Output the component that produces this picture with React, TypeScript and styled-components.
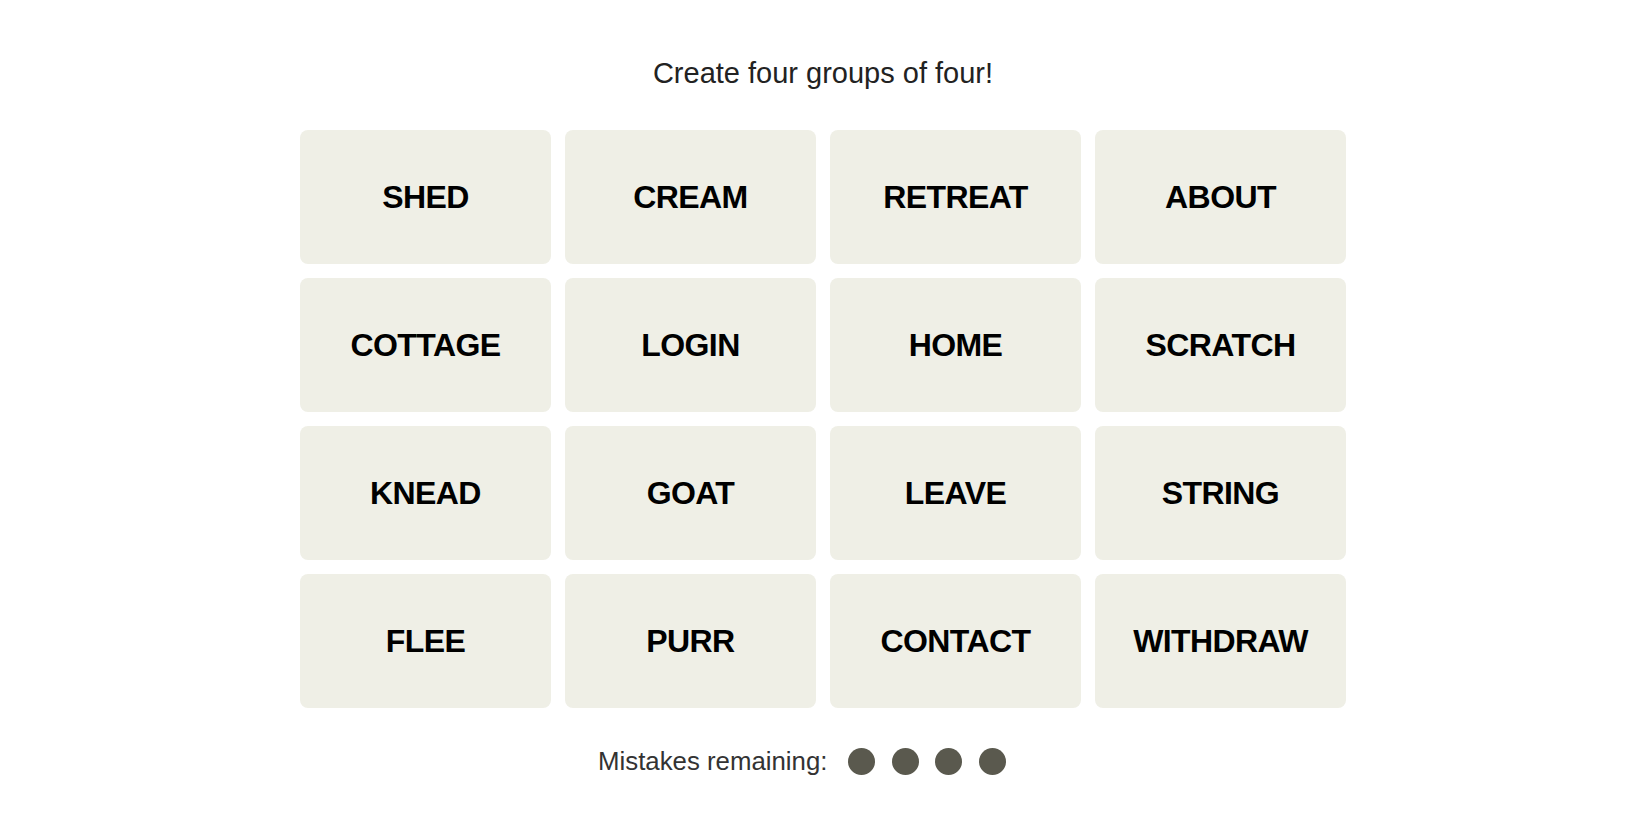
import React from "react";
import styled, { createGlobalStyle } from "styled-components";

const GlobalStyle = createGlobalStyle`
  html, body {
    margin: 0;
    padding: 0;
    background: #ffffff;
  }
  body {
    font-family: "Liberation Sans", Arial, sans-serif;
    color: #121212;
  }
`;

// 16 words, row by row
const words = [
  "SHED", "CREAM", "RETREAT", "ABOUT",
  "COTTAGE", "LOGIN", "HOME", "SCRATCH",
  "KNEAD", "GOAT", "LEAVE", "STRING",
  "FLEE", "PURR", "CONTACT", "WITHDRAW",
];

function App() {
  const mistakesLeft = 4;

  return (
    <>
      <GlobalStyle />
      <Page>
        <Title>Create four groups of four!</Title>
        <Board>
          {words.map((w) => (
            <Tile key={w}>{w}</Tile>
          ))}
        </Board>
        <Mistakes>
          <MistakesLabel>Mistakes remaining:</MistakesLabel>
          <Dots>
            {Array.from({ length: mistakesLeft }).map((_, i) => (
              <Dot key={i} />
            ))}
          </Dots>
        </Mistakes>
      </Page>
    </>
  );
}

export default App;

const Page = styled.div`
  width: 100%;
  height: 825px;
  display: flex;
  flex-direction: column;
  align-items: center;
  padding: 56px 4px 0 0;
  box-sizing: border-box;
`;

const Title = styled.h2`
  margin: 0;
  font-size: 29px;
  font-weight: 400;
  line-height: 34px;
  color: #222222;
`;

const Board = styled.div`
  margin-top: 40px;
  display: grid;
  grid-template-columns: repeat(4, 251px);
  grid-auto-rows: 134px;
  gap: 14px;
`;

const Tile = styled.div`
  background: #efefe6;
  border-radius: 8px;
  display: flex;
  align-items: center;
  justify-content: center;
  font-family: "Liberation Sans", Arial, sans-serif;
  font-weight: 700;
  font-size: 32px;
  color: #000;
  letter-spacing: -0.6px;
  cursor: pointer;
  user-select: none;
`;

const Mistakes = styled.div`
  margin-top: 38px;
  margin-right: 42px;
  display: flex;
  align-items: center;
  gap: 21px;
`;

const MistakesLabel = styled.span`
  font-size: 25.8px;
  line-height: 30px;
  color: #333333;
`;

const Dots = styled.div`
  display: flex;
  gap: 16.5px;
`;

const Dot = styled.span`
  width: 27px;
  height: 27px;
  border-radius: 50%;
  background: #5a594e;
`;
